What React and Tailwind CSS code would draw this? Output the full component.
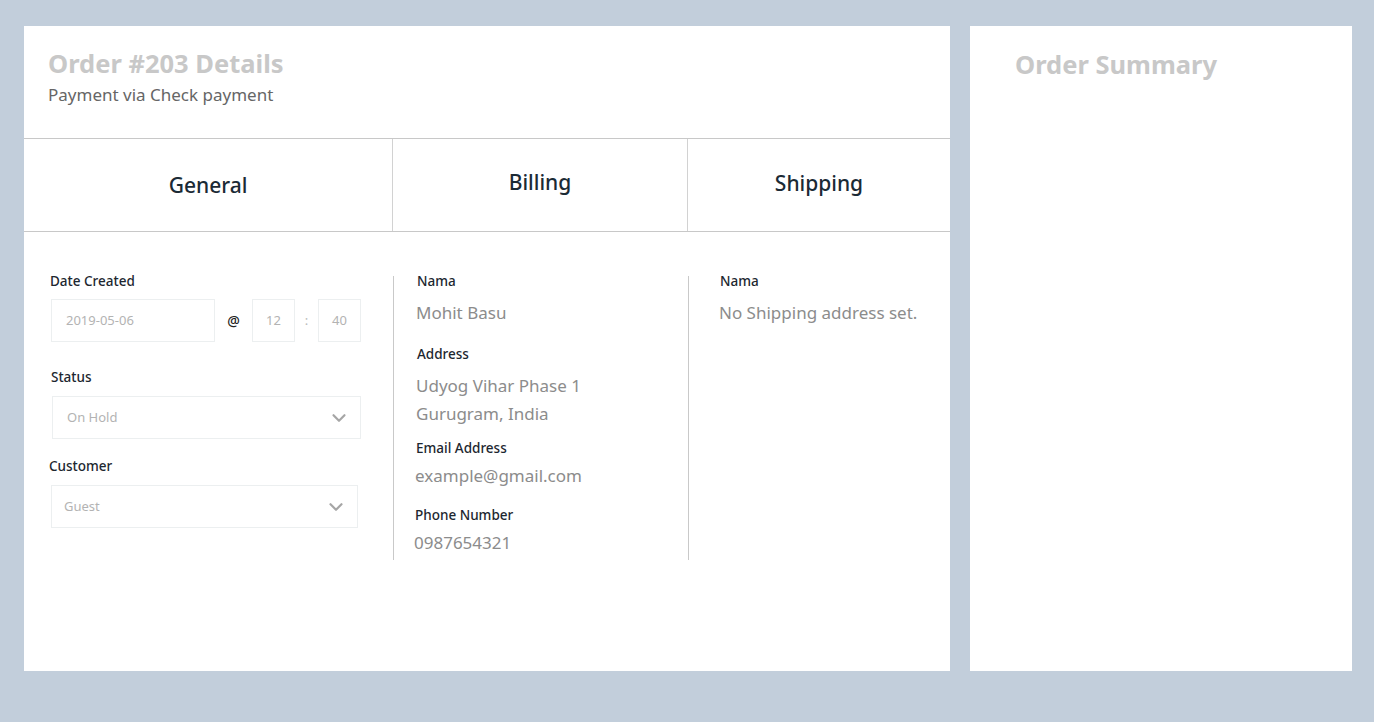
import { ChevronDown } from "lucide-react";

const Label = ({ children, className = "" }) => (
  <div className={`text-[13.5px] leading-5 font-medium text-[#1d2730] ${className}`}>{children}</div>
);

const Value = ({ children, className = "" }) => (
  <div className={`text-[17px] leading-[26px] text-[#8c8c8c] ${className}`}>{children}</div>
);

const Box = ({ children, className = "" }) => (
  <div className={`border border-[#eceff0] flex items-center text-[13px] text-[#b3b3b3] ${className}`}>
    {children}
  </div>
);

const Select = ({ value, className = "" }) => (
  <Box className={`h-[43px] justify-between ${className}`}>
    <span>{value}</span>
    <ChevronDown size={22} strokeWidth={2.4} className="text-[#a6a6a6] mr-[10px]" />
  </Box>
);

const General = () => (
  <div className="w-[369px] pl-[26px] pt-[39px]">
    <Label>Date Created</Label>
    <div className="flex items-center mt-2">
      <Box className="w-[164px] h-[43px] pl-[14px] ml-[1px]">2019-05-06</Box>
      <span className="w-[37px] text-center text-[14px] text-[#222] font-medium">@</span>
      <Box className="w-[43px] h-[43px] justify-center">12</Box>
      <span className="w-[23px] text-center text-[13px] text-[#bbb]">:</span>
      <Box className="w-[43px] h-[43px] justify-center">40</Box>
    </div>
    <Label className="mt-[25px] ml-[1px]">Status</Label>
    <Select value="On Hold" className="mt-[9px] ml-[2px] w-[309px] pl-[14px]" />
    <Label className="mt-[17px] ml-[-1px]">Customer</Label>
    <Select value="Guest" className="mt-[9px] ml-[1px] w-[307px] pl-[12px]" />
  </div>
);

const Billing = () => (
  <div className="w-[295px] h-[284px] mt-[44px] border-l border-[#c9c9c9] pl-[23px] flex flex-col">
    <Label className="mt-[-5px]">Nama</Label>
    <Value className="mt-[9px] ml-[-1px]">Mohit Basu</Value>
    <Label className="mt-[18px]">Address</Label>
    <div className="mt-[8px] ml-[-1px] text-[17px] leading-[28px] text-[#8c8c8c]">
      <div>Udyog Vihar Phase 1</div>
      <div>Gurugram, India</div>
    </div>
    <Label className="mt-[10px] ml-[-1px]">Email Address</Label>
    <Value className="mt-[5px] ml-[-2px]">example@gmail.com</Value>
    <Label className="mt-[16px] ml-[-2px]">Phone Number</Label>
    <Value className="mt-[5px] ml-[-3px]">0987654321</Value>
  </div>
);

const Shipping = () => (
  <div className="flex-1 h-[284px] mt-[44px] border-l border-[#c9c9c9] pl-[31px]">
    <Label className="mt-[-5px]">Nama</Label>
    <Value className="mt-[9px] ml-[-1px]">No Shipping address set.</Value>
  </div>
);

export default function App() {
  return (
    <div
      className="min-h-screen bg-[#c2cedb] flex gap-5 pl-6 pr-[22px] pt-[26px] pb-[51px]"
      style={{ fontFamily: '"Noto Sans", "Open Sans", sans-serif' }}
    >
      <div className="w-[926px] h-[645px] bg-white flex flex-col">
        <div className="h-[113px] border-b border-[#c8c8c8] pl-6 pt-[22px]">
          <h1 className="text-[25.5px] leading-[31px] font-bold text-[#c8c8c8]">Order #203 Details</h1>
          <p className="mt-1 text-[17px] leading-6 text-[#666]">Payment via Check payment</p>
        </div>
        <div className="grid grid-cols-[369px_295px_1fr] h-[93px] border-b border-[#c8c8c8] text-[21px] font-medium text-[#1b2a35]">
          <div className="flex items-center justify-center border-r border-[#d2d2d2] pt-[2px]">General</div>
          <div className="flex items-center justify-center border-r border-[#d2d2d2] pb-[4px]">Billing</div>
          <div className="flex items-center justify-center pb-[2px]">Shipping</div>
        </div>
        <div className="flex items-start">
          <General />
          <Billing />
          <Shipping />
        </div>
      </div>
      <div className="w-[382px] h-[645px] bg-white pl-[45px] pt-[23px]">
        <h2 className="text-[25.5px] leading-[31px] font-bold text-[#c8c8c8]">Order Summary</h2>
      </div>
    </div>
  );
}
